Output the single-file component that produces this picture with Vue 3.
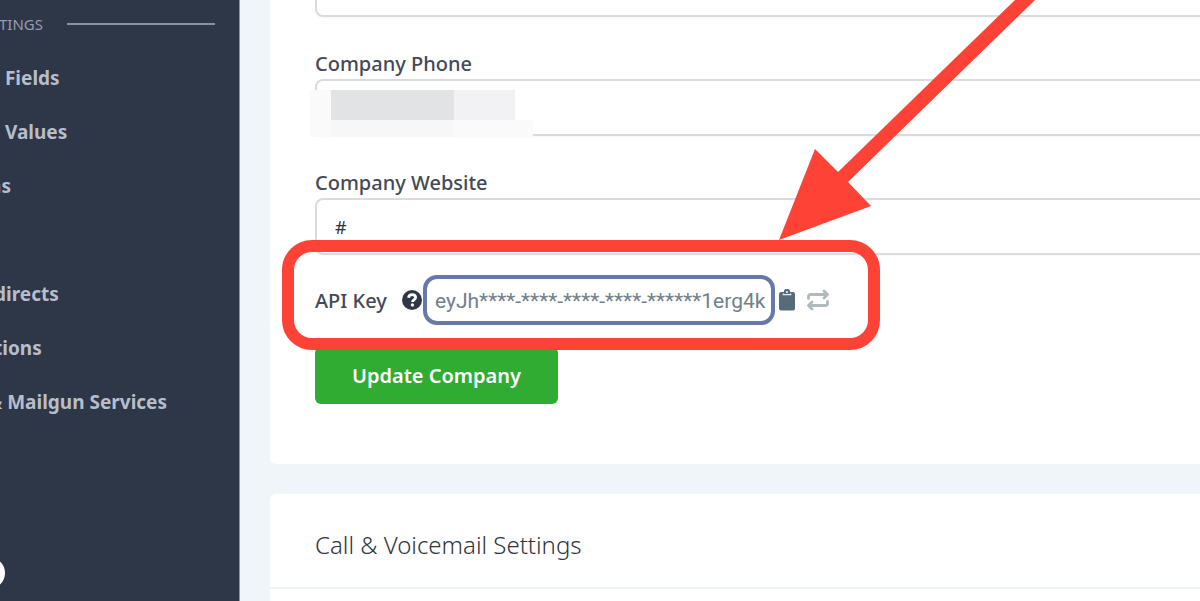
<script setup>
import { ref } from 'vue'

const links = [
  { text: ' Fields' },
  { text: ' Values' },
  { text: 'as', cut: 'cut-mid' },
  { text: '' },
  { text: 'directs', cut: 'cut-short' },
  { text: 'tions', cut: 'cut-short' },
  { text: '& Mailgun Services', cut: 'cut-long' },
]
const name = ref('')
const phone = ref('')
const website = ref('#')
const apiKey = ref('eyJh****-****-****-****-******1erg4k')
</script>

<template>
  <div class="page">
    <nav class="sidebar" aria-label="Settings">
      <div class="group"><span class="group-name">TINGS</span><span class="rule"></span></div>
      <ul class="links">
        <li v-for="(link, i) in links" :key="i">
          <a v-if="link.text" href="#" :class="link.cut">{{ link.text }}</a>
        </li>
      </ul>
      <button class="knob" type="button" aria-label="Collapse"></button>
    </nav>

    <main class="content">
      <section class="card company">
        <form @submit.prevent>
          <input v-model="name" class="field first" type="text" aria-label="Company" />

          <label class="label" for="phone">Company Phone</label>
          <div class="phone">
            <input id="phone" v-model="phone" class="field" type="text" />
            <div class="mosaic" aria-hidden="true">
              <i></i><i class="dark"></i><i class="dim"></i><i class="none"></i>
              <i class="low"></i><i class="low mid"></i><i class="low"></i><i class="low"></i>
            </div>
          </div>

          <label class="label" for="website">Company Website</label>
          <input id="website" v-model="website" class="field" type="text" />

          <div class="key-row">
            <label class="key-label" for="key">API Key</label>
            <button class="icon help" type="button" aria-label="Help">
              <svg width="20" height="20" viewBox="0 0 20 20">
                <circle cx="10" cy="10" r="10" fill="#2d3748" />
                <path d="M6.500 7.700C6.800 5.500 8.200 4.600 10.100 4.600c2 0 3.500 1.100 3.500 2.900 0 2.300-3.100 2.400-3.100 4.400" fill="none" stroke="#fff" stroke-width="2.800" />
                <circle cx="10.400" cy="15" r="1.700" fill="#fff" />
              </svg>
            </button>
            <input id="key" v-model="apiKey" class="key" type="text" readonly />
            <button class="icon copy" type="button" aria-label="Copy">
              <svg width="16" height="22" viewBox="0 0 16 22">
                <path d="M2 3h2.800a3.200 3.200 0 0 1 6.400 0H14a2 2 0 0 1 2 2v14.500a2 2 0 0 1-2 2H2a2 2 0 0 1-2-2V5a2 2 0 0 1 2-2z" fill="#566d79" />
                <path d="M4.300 4.600v1.100h7.400V4.600" fill="none" stroke="#e8edf0" stroke-width="1.200" />
                <circle cx="8" cy="2.900" r="1" fill="#fff" />
              </svg>
            </button>
            <button class="icon swap" type="button" aria-label="Regenerate">
              <svg width="22" height="22" viewBox="0 0 22 22" fill="none" stroke="#b0babd" stroke-width="2.800" stroke-linejoin="round" stroke-linecap="round">
                <path d="M1.500 9.500V7.500a2 2 0 0 1 2-2H19" />
                <path d="M17 2L20.500 5.500l-3.500 3.500" />
                <path d="M20.500 12.500v2a2 2 0 0 1-2 2H3" />
                <path d="M5 13L1.500 16.500l3.500 3.500" />
              </svg>
            </button>
            <div class="highlight" aria-hidden="true"></div>
            <svg class="arrow" width="260" height="240" viewBox="0 0 260 240" aria-hidden="true">
              <path d="M0 240L36 149L59 172L236 0H256L69 182L92 206Z" fill="#ff4236" />
            </svg>
          </div>

          <button class="submit" type="submit">Update Company</button>
        </form>
      </section>

      <section class="card calls">
        <h2>Call &amp; Voicemail Settings</h2>
      </section>
    </main>
  </div>
</template>

<style>
body {
  margin: 0;
  background: #eff5f9;
}
</style>

<style scoped>
.page {
  display: flex;
  height: 100vh;
  overflow: hidden;
  background: #eff5f9;
  font-family: "Noto Sans", "Open Sans", sans-serif;
  color: #434955;
}
.page * {
  box-sizing: border-box;
}
.sidebar {
  position: relative;
  flex: 0 0 240px;
  overflow: hidden;
  background: #2d3748;
  border-right: 1px solid #8c95a0;
}
.group {
  display: flex;
  align-items: center;
  gap: 24px;
  height: 48px;
  padding-right: 24px;
  font-size: 15px;
  color: #949dad;
}
.group-name {
  margin-left: -1px;
}
.rule {
  flex: 1;
  height: 2px;
  background: #8791a4;
}
.links {
  margin: 3px 0 0;
  padding: 0;
  list-style: none;
}
.links li {
  height: 54px;
  line-height: 54px;
}
.links a {
  display: block;
  font-size: 19px;
  font-weight: 700;
  color: #b7bec9;
  text-decoration: none;
  white-space: pre;
}
.links .cut-short {
  margin-left: -6px;
}
.links .cut-mid {
  margin-left: -10px;
}
.links .cut-long {
  margin-left: -12px;
}
.knob {
  position: absolute;
  left: -27px;
  bottom: 12px;
  width: 32px;
  height: 32px;
  padding: 0;
  border: 0;
  border-radius: 50%;
  background: #fff;
}
.content {
  flex: 1;
  min-width: 0;
  padding-left: 30px;
}
.card {
  background: #fff;
}
.company {
  padding: 0 0 60px 45px;
  border-radius: 0 0 0 6px;
}
.field {
  display: block;
  width: 100%;
  height: 57px;
  padding: 0 18px;
  border: 2px solid #d9dbde;
  border-right: 0;
  border-radius: 8px 0 0 8px;
  background: #fff;
  box-shadow: 0 1px 2px #0000000a;
  font: 18px "Noto Sans", sans-serif;
  color: #2d3340;
  outline: 0;
}
.first {
  margin-top: -40px;
}
.label {
  display: block;
  height: 62px;
  padding-top: 32px;
  line-height: 30px;
  font-size: 20px;
  font-weight: 500;
}
.company form {
  display: flow-root;
}
.phone {
  position: relative;
}
.mosaic {
  position: absolute;
  left: -5px;
  top: 11px;
  display: grid;
  grid-template: 30px 17px / 21px 123px 61px 18px;
}
.mosaic i {
  background: #fafafa;
}
.mosaic .dark {
  background: #e2e3e5;
}
.mosaic .dim {
  background: #f2f2f4;
}
.mosaic .none {
  background: #fff;
}
.mosaic .mid {
  background: #f7f7f7;
}
.key-row {
  position: relative;
  display: flex;
  align-items: center;
  height: 92px;
  padding-bottom: 2px;
}
.key-label {
  width: 87px;
  font-size: 20px;
  font-weight: 500;
}
.icon {
  display: block;
  padding: 0;
  border: 0;
  background: none;
  line-height: 0;
}
.key {
  width: 352px;
  height: 50px;
  margin-left: 1px;
  padding: 2px 4px 0 8px;
  border: 4px solid #6679a8;
  border-radius: 14px;
  background: #fff;
  font: 21px Roboto, sans-serif;
  color: #71808a;
  outline: 0;
}
.copy {
  margin-left: 4px;
}
.swap {
  margin-left: 12px;
}
.highlight {
  position: absolute;
  left: -33px;
  top: -15px;
  width: 598px;
  height: 110px;
  border: 12px solid #ff4236;
  border-radius: 30px;
  pointer-events: none;
}
.arrow {
  position: absolute;
  left: 464px;
  bottom: 107px;
  pointer-events: none;
}
.submit {
  display: block;
  width: 243px;
  height: 57px;
  border: 0;
  border-radius: 6px;
  background: #2fac31;
  font: 600 20px "Noto Sans", sans-serif;
  color: #fff;
}
.calls {
  height: 200px;
  margin-top: 30px;
  border-radius: 6px 0 0 0;
}
h2 {
  margin: 0;
  padding-left: 45px;
  height: 95px;
  line-height: 102px;
  border-bottom: 2px solid #f0f3f5;
  font-size: 24px;
  font-weight: 300;
  color: #2f3540;
}
</style>
